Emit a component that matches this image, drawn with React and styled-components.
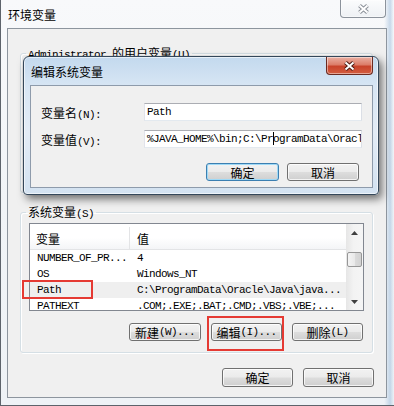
import React from 'react';
import styled, { createGlobalStyle, css } from 'styled-components';

const CJK_RUN = /([\u3000-\u303f\u4e00-\u9fff]+)/;

const GlobalStyle = createGlobalStyle`
  html, body { margin: 0; padding: 0; }
  body { background: #ffffff; overflow: hidden; }
  * { box-sizing: border-box; }
`;

const mono = css`
  font-family: "Liberation Mono", "Noto Sans CJK SC", monospace;
  font-size: 11px;
  letter-spacing: -0.6px;
  color: #000;
`;

const Cjk = styled.span`
  font-family: "Noto Sans CJK SC", sans-serif;
  font-size: 12px;
  letter-spacing: 0;
`;

// split mixed text so Chinese runs get the wider CJK face
const Text = ({ children }) =>
  String(children)
    .split(CJK_RUN)
    .filter(Boolean)
    .map((part, i) =>
      CJK_RUN.test(part) ? <Cjk key={i}>{part}</Cjk> : <span key={i}>{part}</span>
    );

const Window = styled.div`
  position: relative;
  width: 394px;
  height: 406px;
  border-left: 1px solid #5d636b;
  border-bottom: 1px solid #5d636b;
  padding: 0 7px 7px 6px;
  display: flex;
  flex-direction: column;
  background:
    linear-gradient(90deg, rgba(255,255,255,0) 0%, rgba(255,255,255,0) 97.5%, rgba(160,190,220,0.55) 99%, rgba(255,255,255,0) 100%),
    linear-gradient(180deg, #f8f9fb 0%, #f1f4f7 50%, #eef2f6 100%);
  ${mono}
`;

const TitleBar = styled.div`
  height: 28px;
  flex-shrink: 0;
  display: flex;
  justify-content: space-between;
  align-items: flex-start;
`;

const Title = styled.div`
  margin: 7px 0 0 1px;
  line-height: 16px;
  font-family: "Noto Sans CJK SC", sans-serif;
  font-size: 12px;
  letter-spacing: 0;
  color: #000;
`;

const CloseButton = styled.div`
  width: ${p => p.$w}px;
  height: 18px;
  margin-right: ${p => p.$mr || 0}px;
  border: 1px solid ${p => (p.$active ? '#6b2a20' : '#8c939c')};
  border-top: none;
  border-radius: 0 0 4px 4px;
  display: flex;
  align-items: center;
  justify-content: center;
  background: ${p =>
    p.$active
      ? 'linear-gradient(180deg, #eab0a3 0%, #dc7d69 45%, #c8432b 55%, #d35d40 100%)'
      : 'linear-gradient(180deg, #fbfcfd 0%, #eef1f4 100%)'};
  box-shadow: inset 0 0 0 1px rgba(255, 255, 255, 0.45);
`;

const CloseGlyph = ({ edge }) => (
  <svg width="13" height="10" viewBox="0 0 13 10">
    <path d="M2.5 1.5 L10.5 8.5 M10.5 1.5 L2.5 8.5" stroke={edge} strokeWidth="4" />
    <path d="M2.5 1.5 L10.5 8.5 M10.5 1.5 L2.5 8.5" stroke="#fff" strokeWidth="2" />
  </svg>
);

const Client = styled.div`
  flex: 1;
  border: 1px solid #8d959e;
  background: #f0f0f0;
  display: flex;
  flex-direction: column;
  padding: 17px 13px 10px 12px;
`;

const Group = styled.fieldset`
  margin: 0 0 ${p => p.$mb || 0}px;
  min-width: 0;
  height: ${p => p.$h}px;
  flex-shrink: 0;
  border: 1px solid #d5dfe5;
  border-radius: 3px;
  box-shadow: inset 1px 1px 0 #fff, 1px 1px 0 #fff;
  padding: 4px 8px 0;
  display: flex;
  flex-direction: column;
`;

const Legend = styled.legend`
  height: 14px;
  line-height: 14px;
  padding: 0 2px;
  margin-left: -3px;
  white-space: nowrap;
`;

const ListWrap = styled.div`
  position: relative;
`;

const ListView = styled.div`
  height: 88px;
  flex-shrink: 0;
  border: 1px solid #828790;
  background: #fff;
  display: flex;
  overflow: hidden;
`;

const ListBody = styled.div`
  flex: 1;
  min-width: 0;
`;

const ListHeader = styled.div`
  display: grid;
  grid-template-columns: 100px 1fr;
  height: 26px;
  padding-top: 3px;
  background: linear-gradient(180deg, #ffffff 0%, #ffffff 55%, #f4f5f7 100%);
  border-bottom: 1px solid #e3e4e6;
`;

const HeaderCell = styled.div`
  display: flex;
  align-items: center;
  padding-left: ${p => p.$pad}px;
  border-right: ${p => (p.$divider ? '1px solid #e3e4e6' : 'none')};
`;

const Row = styled.div`
  display: grid;
  grid-template-columns: 100px 1fr;
  height: 16px;
  line-height: 17px;
  white-space: nowrap;
  background: ${p => (p.$selected ? '#efefef' : 'transparent')};
`;

const Cell = styled.div`
  padding-left: 7px;
  height: 16px;
  overflow: hidden;
`;

const ScrollBar = styled.div`
  width: 17px;
  flex-shrink: 0;
  display: flex;
  flex-direction: column;
  background: linear-gradient(90deg, #e6e6e6 0%, #f3f3f3 45%, #f5f5f5 100%);
`;

const ScrollArrow = styled.div`
  height: 17px;
  flex-shrink: 0;
  display: flex;
  align-items: center;
  justify-content: center;
`;

const Thumb = styled.div`
  margin: 11px 1px 0;
  height: 15px;
  border: 1px solid #979797;
  border-radius: 2px;
  background: linear-gradient(90deg, #f4f4f4 0%, #e9e9e9 50%, #dbdbdb 51%, #d2d2d2 100%);
`;

const Spacer = styled.div`
  flex: 1;
`;

const Arrow = ({ down }) => (
  <svg width="7" height="4" viewBox="0 0 7 4">
    <polygon points={down ? '0,0 7,0 3.5,4' : '0,4 7,4 3.5,0'} fill="#3f3f3f" />
  </svg>
);

const ButtonRow = styled.div`
  display: flex;
  justify-content: flex-end;
  gap: ${p => p.$gap}px;
  margin: ${p => p.$m};
  flex-shrink: 0;
`;

const Button = styled.button`
  position: relative;
  width: ${p => p.$w}px;
  height: ${p => p.$h || 18}px;
  margin: 0;
  padding: 0;
  flex-shrink: 0;
  border: 1px solid ${p => (p.$default ? '#3c7fb1' : '#707070')};
  border-radius: 3px;
  background: linear-gradient(180deg, #f2f2f2 0%, #ebebeb 48%, #dddddd 52%, #cfcfcf 100%);
  box-shadow: inset 0 0 0 1px ${p => (p.$default ? '#9fd9f6' : 'rgba(255,255,255,0.75)')};
  display: flex;
  align-items: center;
  justify-content: center;
  ${mono}
`;

const RedMark = styled.div`
  position: absolute;
  left: ${p => p.$x}px;
  top: ${p => p.$y}px;
  width: ${p => p.$w}px;
  height: ${p => p.$h}px;
  border: 2px solid #e53a33;
  pointer-events: none;
`;

const Speck = styled.div`
  position: absolute;
  left: 17px;
  top: 13px;
  width: 3px;
  height: 2px;
  background: #e8403a;
`;

const Dialog = styled.div`
  position: absolute;
  left: 22px;
  top: 56px;
  width: 356px;
  height: 139px;
  border: 1px solid #34475a;
  border-radius: 6px 6px 4px 4px;
  padding: 0 5px 6px 6px;
  display: flex;
  flex-direction: column;
  background: linear-gradient(180deg, #c3d9ee 0%, #d8e6f4 22%, #e3ecf6 55%, #d3e2f1 100%);
  box-shadow: 3px 4px 9px rgba(0, 0, 0, 0.55), inset 0 0 0 1px rgba(255, 255, 255, 0.6);
`;

const DialogClient = styled.div`
  flex: 1;
  border: 1px solid #8e9bab;
  background: #f0f0f0;
  padding: 17px 10px 0;
  display: flex;
  flex-direction: column;
`;

const FieldRow = styled.div`
  display: flex;
  align-items: center;
  height: 18px;
  margin-bottom: ${p => p.$mb || 0}px;
`;

const FieldLabel = styled.div`
  width: 103px;
  flex-shrink: 0;
  white-space: nowrap;
`;

const TextBox = styled.div`
  flex: 1;
  min-width: 0;
  height: 18px;
  line-height: 16px;
  padding: 0 2px;
  border: 1px solid;
  border-color: #abadb3 #dbdfe6 #e3e9ef #e2e3ea;
  background: #fff;
  white-space: nowrap;
  overflow: hidden;
`;

const Caret = styled.span`
  display: inline-block;
  width: 1px;
  height: 13px;
  margin-right: -1px;
  vertical-align: -3px;
  background: #000;
`;

const systemVars = [
  ['NUMBER_OF_PR...', '4'],
  ['OS', 'Windows_NT'],
  ['Path', 'C:\\ProgramData\\Oracle\\Java\\java...'],
  ['PATHEXT', '.COM;.EXE;.BAT;.CMD;.VBS;.VBE;...'],
];

const VarList = ({ rows, selected }) => (
  <ListView>
    <ListBody>
      <ListHeader>
        <HeaderCell $pad={6} $divider><Cjk>变量</Cjk></HeaderCell>
        <HeaderCell $pad={7}><Cjk>值</Cjk></HeaderCell>
      </ListHeader>
      {rows.map(([name, value]) => (
        <Row key={name} $selected={name === selected}>
          <Cell>{name}</Cell>
          <Cell>{value}</Cell>
        </Row>
      ))}
    </ListBody>
    <ScrollBar>
      <ScrollArrow><Arrow /></ScrollArrow>
      <Thumb />
      <Spacer />
      <ScrollArrow><Arrow down /></ScrollArrow>
    </ScrollBar>
  </ListView>
);

export default function App() {
  return (
    <>
      <GlobalStyle />
      <Window>
        <TitleBar>
          <Title>环境变量</Title>
          <CloseButton $w={46} $mr={1}>
            <CloseGlyph edge="#8a9098" />
          </CloseButton>
        </TitleBar>

        <Client>
          {/* user variables group sits under the edit dialog; only its frame shows */}
          <Group $h={147} $mb={12}>
            <Legend><Text>Administrator 的用户变量(U)</Text></Legend>
            <ListView />
          </Group>

          <Group $h={148}>
            <Legend><Text>系统变量(S)</Text></Legend>
            <ListWrap>
              <VarList rows={systemVars} selected="Path" />
              <RedMark $x={-7} $y={57} $w={71} $h={19} />
            </ListWrap>
            <ButtonRow $gap={10} $m="12px 1px 0 0">
              <Button $w={72}>
                <Text>新建(W)...</Text>
                <Speck />
              </Button>
              <Button $w={71}>
                <Text>编辑(I)...</Text>
                <RedMark $x={-5} $y={-8} $w={77} $h={35} />
              </Button>
              <Button $w={71}><Text>删除(L)</Text></Button>
            </ButtonRow>
          </Group>

          <ButtonRow $gap={10} $m="15px -1px 0 0">
            <Button $w={71} $h={19}><Cjk>确定</Cjk></Button>
            <Button $w={71} $h={19}><Cjk>取消</Cjk></Button>
          </ButtonRow>
        </Client>

        <Dialog>
          <TitleBar>
            <Title>编辑系统变量</Title>
            <CloseButton $w={47} $active>
              <CloseGlyph edge="#4a1a12" />
            </CloseButton>
          </TitleBar>
          <DialogClient>
            <FieldRow $mb={9}>
              <FieldLabel><Text>变量名(N):</Text></FieldLabel>
              <TextBox>Path</TextBox>
            </FieldRow>
            <FieldRow>
              <FieldLabel><Text>变量值(V):</Text></FieldLabel>
              <TextBox>
                %JAVA_HOME%\bin;C:\Pr<Caret />ogramData\Oracle
              </TextBox>
            </FieldRow>
            <ButtonRow $gap={8} $m="15px 3px 0 0">
              <Button $w={73} $default><Cjk>确定</Cjk></Button>
              <Button $w={72}><Cjk>取消</Cjk></Button>
            </ButtonRow>
          </DialogClient>
        </Dialog>
      </Window>
    </>
  );
}
